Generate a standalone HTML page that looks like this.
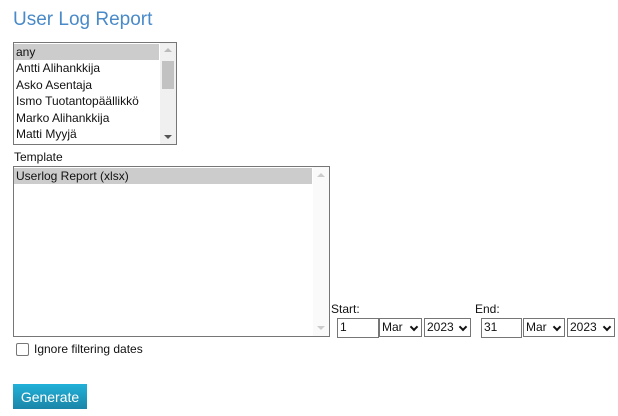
<!DOCTYPE html><html><head><style>
body{margin:0;width:618px;height:416px;background:#fff;font-family:"Liberation Sans",sans-serif;font-size:12px;color:#111;position:relative;overflow:hidden}
.a{position:absolute}
.sel{background:#ccc}
.row{height:16.4px;line-height:16px;padding-left:2px;white-space:nowrap}
.box{border:1px solid #767676;background:#fff;box-sizing:border-box}
.sb{position:absolute;right:0;top:0;bottom:0;width:16px;background:#f0f0f0}
.dd,.in{position:absolute;border:1px solid #767676;box-sizing:border-box;height:19px;line-height:17px;padding-left:2px;font-size:12px;background:#fff}
.dd:after{content:"";position:absolute;right:4px;top:5px;width:4px;height:4px;border-right:2px solid #111;border-bottom:2px solid #111;transform:rotate(45deg)}
</style></head><body>
<div class="a" style="left:13px;top:9px;font-size:19px;color:#4a8ac8">User Log Report</div>
<div class="a box" style="left:13px;top:42px;width:164px;height:103px;overflow:hidden">
<div style="padding-top:1px;width:145px">
<div class="row sel">any</div><div class="row">Antti Alihankkija</div><div class="row">Asko Asentaja</div><div class="row">Ismo Tuotantopäällikkö</div><div class="row">Marko Alihankkija</div><div class="row">Matti Myyjä</div></div>
<div class="sb"><div style="position:absolute;left:2px;top:18px;width:12px;height:28px;background:#c2c2c2"></div>
<div style="position:absolute;left:4px;top:5px;border:4px solid transparent;border-bottom-color:#bbb;border-top:0"></div>
<div style="position:absolute;left:4px;bottom:5px;border:4px solid transparent;border-top-color:#555;border-bottom:0"></div></div></div>
<div class="a" style="left:14px;top:150px">Template</div>
<div class="a box" style="left:13px;top:166px;width:317px;height:171px;overflow:hidden">
<div style="padding-top:1px;width:298px"><div class="row sel">Userlog Report (xlsx)</div></div>
<div class="sb" style="background:#fafafa"><div style="position:absolute;left:4px;top:6px;border:4px solid transparent;border-bottom-color:#ccc;border-top:0"></div>
<div style="position:absolute;left:4px;bottom:6px;border:4px solid transparent;border-top-color:#ccc;border-bottom:0"></div></div></div>
<div class="a" style="left:331px;top:302px">Start:</div>
<div class="a" style="left:475px;top:302px">End:</div>
<div class="in" style="left:337px;top:318px;width:42px;height:20px">1</div>
<div class="dd" style="left:379px;top:318px;width:43px">Mar</div>
<div class="dd" style="left:424px;top:318px;width:47px">2023</div>
<div class="in" style="left:481px;top:318px;width:41px;height:20px">31</div>
<div class="dd" style="left:523px;top:318px;width:42px">Mar</div>
<div class="dd" style="left:567px;top:318px;width:48px">2023</div>
<div class="a" style="left:16px;top:343px;width:11px;height:11px;border:1px solid #777;border-radius:2px"></div>
<div class="a" style="left:34px;top:342px">Ignore filtering dates</div>
<div class="a" style="left:13px;top:384px;width:74px;height:25px;background:linear-gradient(#22b0d8,#1a86a8);color:#fff;font-size:14px;line-height:27px;text-align:center">Generate</div>
</body></html>
